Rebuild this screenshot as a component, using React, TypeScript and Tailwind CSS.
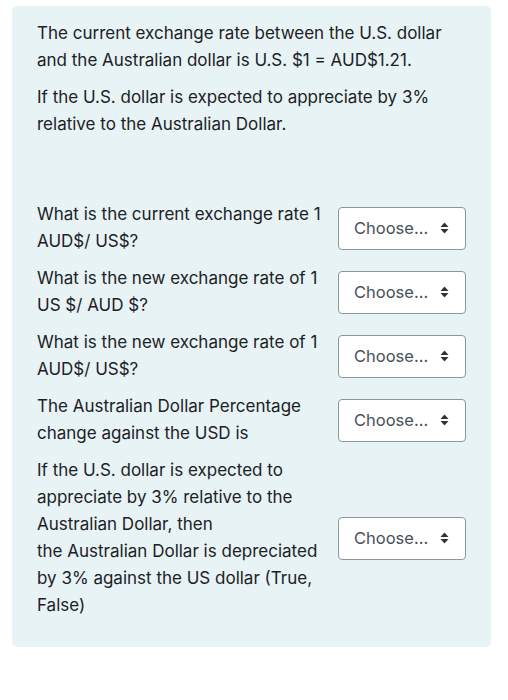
interface Row {
  label: string[];
}

const rows: Row[] = [
  { label: ['What is the current exchange rate 1', 'AUD$/ US$?'] },
  { label: ['What is the new exchange rate of 1', 'US $/ AUD $?'] },
  { label: ['What is the new exchange rate of 1', 'AUD$/ US$?'] },
  { label: ['The Australian Dollar Percentage', 'change against the USD is'] },
  {
    label: [
      'If the U.S. dollar is expected to',
      'appreciate by 3% relative to the',
      'Australian Dollar, then',
      'the Australian Dollar is depreciated',
      'by 3% against the US dollar (True,',
      'False)',
    ],
  },
];

function Caret() {
  return (
    <svg width="9" height="12" viewBox="0 0 9 12" className="ml-[12px]">
      <path d="M4.5 0.5 L8.5 5 L0.5 5 Z" fill="#333" />
      <path d="M4.5 11.5 L8.5 7 L0.5 7 Z" fill="#333" />
    </svg>
  );
}

function Select() {
  return (
    <div className="flex h-[43px] w-[128px] shrink-0 items-center rounded-[4px] border border-[#8f959e] bg-white pl-[15px] text-[16.5px] text-[#495057]">
      <span>Choose...</span>
      <Caret />
    </div>
  );
}

export default function App() {
  return (
    <div
      className="min-h-[700px] bg-white pt-[6px] text-[17px] leading-[27px] text-[#1d2125]"
      style={{ fontFamily: 'Inter, "Noto Sans", sans-serif' }}
    >
      <div className="ml-[12px] w-[479px] rounded-[5px] bg-[#e7f3f5] pb-[28px] pl-[25px] pr-[16px] pt-[14px]">
        <p>
          The current exchange rate between the U.S. dollar
          <br />
          and the Australian dollar is U.S. $1 = AUD$1.21.
        </p>
        <p className="mt-[10px]">
          If the U.S. dollar is expected to appreciate by 3%
          <br />
          relative to the Australian Dollar.
        </p>
        <div className="mt-[63px] flex flex-col gap-[10px]">
          {rows.map((row, i) => (
            <div key={i} className="flex items-center">
              <div className="w-[301px]">
                {row.label.map((l, j) => (
                  <div key={j} className="whitespace-nowrap">{l}</div>
                ))}
              </div>
              <Select />
            </div>
          ))}
        </div>
      </div>
    </div>
  );
}
